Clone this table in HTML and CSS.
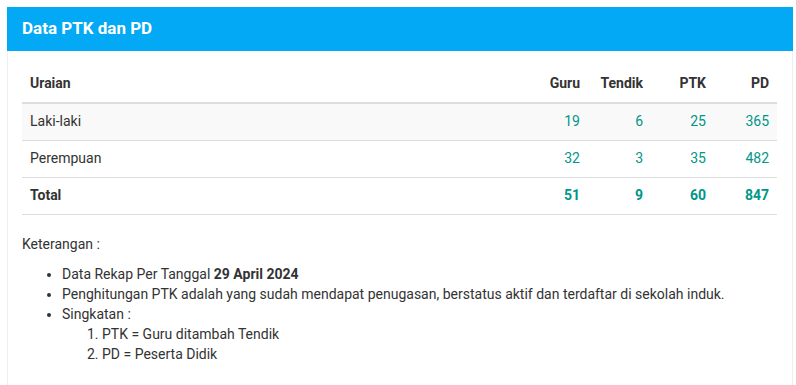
FILE: index.html
```html
<!DOCTYPE html>
<html>
<head>
<meta charset="utf-8">
<link rel="stylesheet" href="styles.css">
</head>
<body>
<div class="card">
  <div class="card-header">Data PTK dan PD</div>
  <div class="card-body">
    <table class="data-table">
      <thead>
        <tr>
          <th class="label-col">Uraian</th>
          <th class="num">Guru</th>
          <th class="num">Tendik</th>
          <th class="num">PTK</th>
          <th class="num">PD</th>
        </tr>
      </thead>
      <tbody>
        <tr class="striped">
          <td>Laki-laki</td>
          <td class="num val">19</td>
          <td class="num val">6</td>
          <td class="num val">25</td>
          <td class="num val">365</td>
        </tr>
        <tr>
          <td>Perempuan</td>
          <td class="num val">32</td>
          <td class="num val">3</td>
          <td class="num val">35</td>
          <td class="num val">482</td>
        </tr>
        <tr class="total">
          <td>Total</td>
          <td class="num val">51</td>
          <td class="num val">9</td>
          <td class="num val">60</td>
          <td class="num val">847</td>
        </tr>
      </tbody>
    </table>
    <p class="note-title">Keterangan :</p>
    <ul class="notes">
      <li>Data Rekap Per Tanggal <b>29 April 2024</b></li>
      <li>Penghitungan PTK adalah yang sudah mendapat penugasan, berstatus aktif dan terdaftar di sekolah induk.</li>
      <li>Singkatan :
        <ol class="abbr">
          <li>PTK = Guru ditambah Tendik</li>
          <li>PD = Peserta Didik</li>
        </ol>
      </li>
    </ul>
  </div>
</div>
</body>
</html>
```
FILE: styles.css
```css
html, body {
  margin: 0;
  padding: 0;
  background: #fff;
}
body {
  font-family: Roboto, "Liberation Sans", sans-serif;
  font-size: 14px;
  line-height: 20px;
  color: #333;
}
.card {
  margin: 7px 3px 0 7px;
  background: #fff;
}
.card-header {
  background: #03a9f4;
  color: #fff;
  font-size: 17px;
  font-weight: 700;
  height: 44px;
  line-height: 43px;
  padding: 0 15px;
}
.card-body {
  border-left: 1px solid #eee;
  border-right: 1px solid #eee;
  padding: 15px 15px 15px 14px;
}
.data-table {
  width: 100%;
  border-collapse: collapse;
  border-spacing: 0;
  margin-bottom: 19px;
}
.data-table th,
.data-table td {
  padding: 8px;
  line-height: 19px;
  text-align: left;
  vertical-align: top;
}
.data-table th {
  padding-bottom: 9px;
  font-weight: 700;
  border-bottom: 2px solid #ddd;
}
.data-table td {
  padding-bottom: 9px;
  border-bottom: 1px solid #ddd;
}
.data-table .num {
  text-align: right;
  width: 47px;
}
.data-table .val {
  color: #009688;
}
.data-table tr.striped td {
  background: #f9f9f9;
}
.data-table tr.total td {
  font-weight: 700;
}
.note-title {
  margin: 0 0 10px;
}
.notes {
  margin: 0 0 10px;
  padding-left: 40px;
}
.abbr {
  margin: 0;
  padding-left: 40px;
}
```
